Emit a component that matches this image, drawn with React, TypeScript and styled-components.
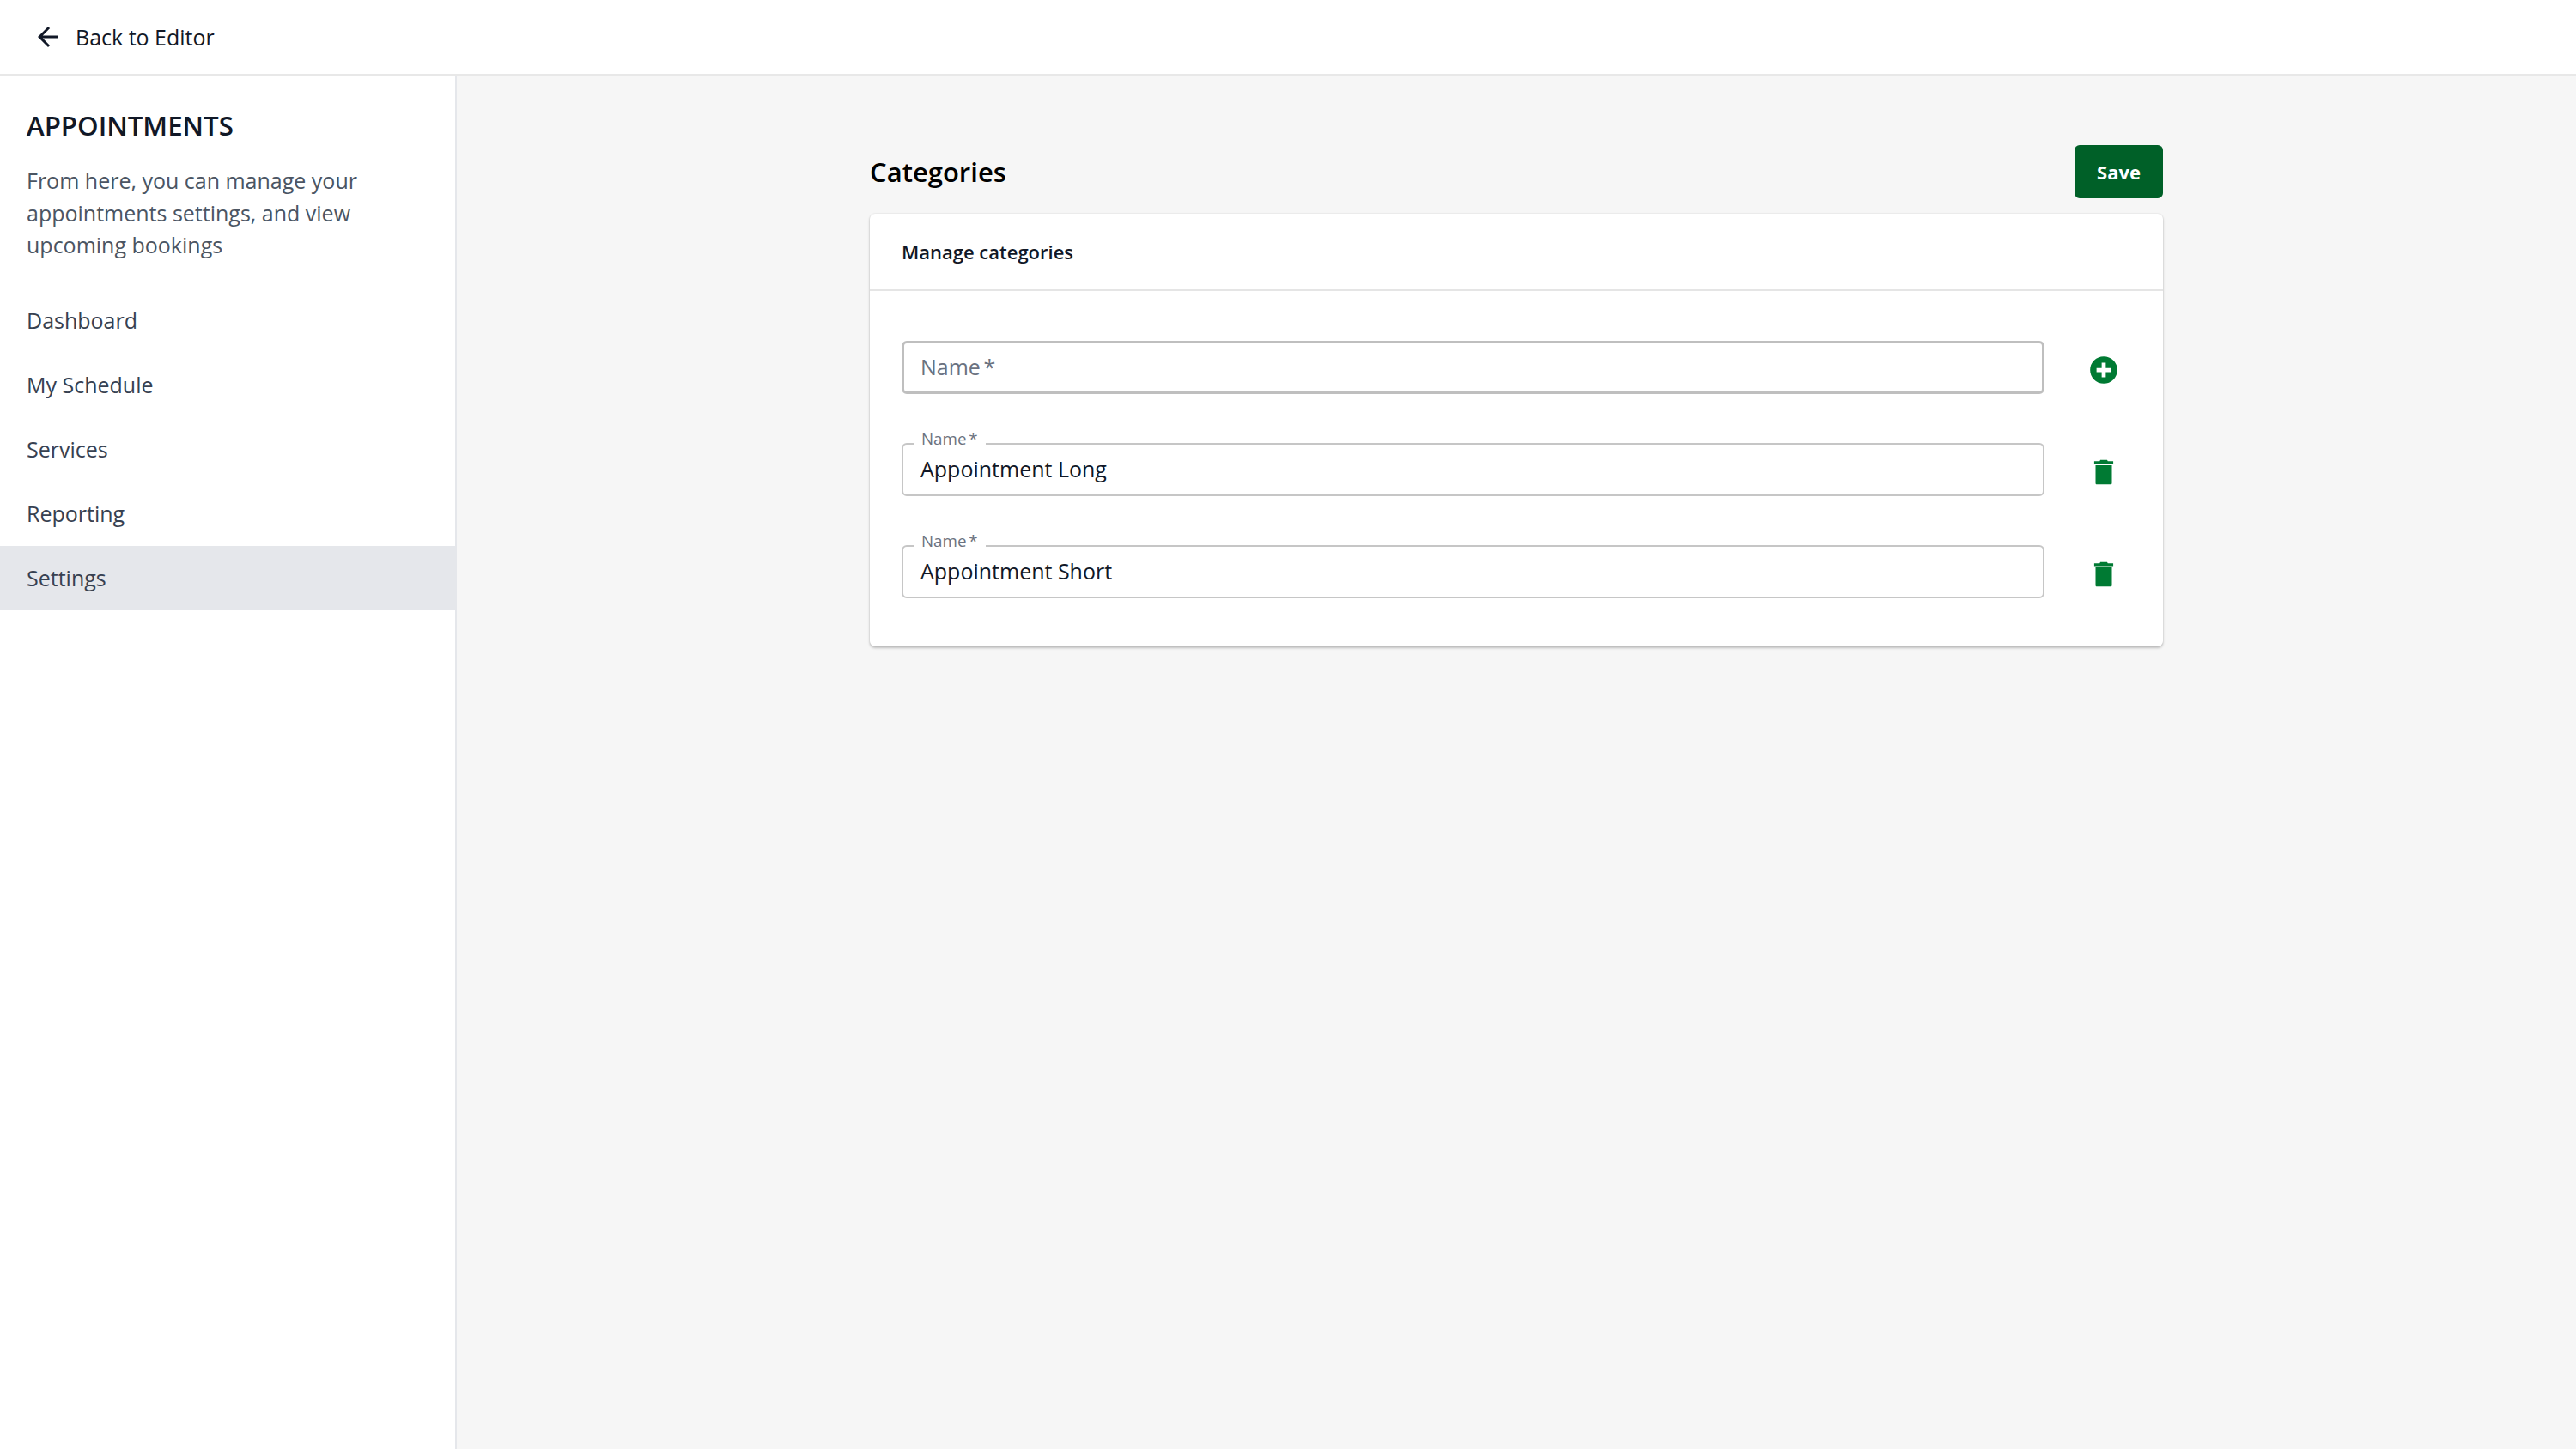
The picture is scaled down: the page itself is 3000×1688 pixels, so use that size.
import { createGlobalStyle } from "styled-components";
import styled from "styled-components";

const GlobalStyle = createGlobalStyle`
  html, body {
    margin: 0;
    padding: 0;
    background-color: #f6f6f6;
    font-family: "Open Sans", "Noto Sans", sans-serif;
  }
  * {
    box-sizing: border-box;
  }
`;

const Page = styled.div`
  width: 3000px;
  height: 1688px;
  display: flex;
  flex-direction: column;
  overflow: hidden;
`;

const TopBar = styled.header`
  height: 88px;
  flex-shrink: 0;
  display: flex;
  align-items: center;
  padding-left: 38px;
  gap: 14px;
  background-color: #fff;
  border-bottom: 2px solid #e8e8e8;
`;

const BackLabel = styled.span`
  font-size: 25px;
  color: #111827;
`;

const Body = styled.div`
  flex: 1;
  display: flex;
  min-height: 0;
`;

const Sidebar = styled.aside`
  width: 532px;
  flex-shrink: 0;
  background-color: #fff;
  border-right: 2px solid #e5e7eb;
  display: flex;
  flex-direction: column;
`;

const SideHeader = styled.div`
  padding: 38px 31px 31px;
`;

const SideTitle = styled.h1`
  margin: 0 0 26px;
  font-size: 31.25px;
  line-height: 40px;
  font-weight: 600;
  color: #111827;
`;

const SideText = styled.p`
  margin: 0;
  font-size: 25px;
  line-height: 37.5px;
  color: #4b5563;
`;

const NavItem = styled.div<{ $active?: boolean }>`
  height: 75px;
  display: flex;
  align-items: center;
  padding-left: 31px;
  font-size: 25px;
  color: #374151;
  background-color: ${(props) => (props.$active ? "#e5e7eb" : "transparent")};
`;

const Main = styled.main`
  flex: 1;
  display: flex;
  justify-content: center;
  padding-top: 81px;
`;

const Content = styled.div`
  width: 1506px;
`;

const ContentHeader = styled.div`
  height: 62px;
  margin-bottom: 18px;
  display: flex;
  align-items: center;
  justify-content: space-between;
`;

const PageTitle = styled.h2`
  margin: 0;
  font-size: 31px;
  font-weight: 600;
  color: #000;
`;

const SaveButton = styled.button`
  width: 103px;
  height: 62px;
  border: none;
  border-radius: 6px;
  background-color: #006028;
  color: #fff;
  font-family: inherit;
  font-size: 22px;
  font-weight: 700;
`;

const Card = styled.section`
  background-color: #fff;
  border-radius: 6px;
  box-shadow: 0 2px 3px rgba(0, 0, 0, 0.22), 0 0 2px rgba(0, 0, 0, 0.14);
`;

const CardHeader = styled.div`
  height: 90px;
  display: flex;
  align-items: center;
  padding-left: 37px;
  border-bottom: 2px solid #e5e5e5;
  font-size: 22px;
  font-weight: 600;
  color: #111827;
`;

const CardBody = styled.div`
  padding: 58px 0 56px 37px;
  display: flex;
  flex-direction: column;
  gap: 57px;
`;

const Row = styled.div`
  display: flex;
  align-items: center;
`;

const Field = styled.div<{ $empty?: boolean }>`
  position: relative;
  width: 1331px;
  height: 62px;
  display: flex;
  align-items: center;
  padding: ${(props) => (props.$empty ? "0 19px 2px" : "0 20px 3px")};
  border-radius: 6px;
  border: ${(props) => (props.$empty ? "3px solid #bfbfbf" : "2px solid #c6c6c6")};
  font-size: 25px;
  color: #111827;
`;

const Placeholder = styled.span`
  font-size: 25px;
  word-spacing: -3px;
  color: #6b7280;
`;

const FloatingLabel = styled.label`
  position: absolute;
  top: -19px;
  left: 12px;
  padding: 0 9px;
  background: linear-gradient(to bottom, transparent 60%, #fff 60%);
  font-size: 18.75px;
  word-spacing: -2px;
  line-height: 24px;
  color: #6b7280;
`;

const IconButton = styled.div`
  width: 38px;
  height: 38px;
  margin: 5px 0 0 50px;
  display: flex;
  align-items: center;
  justify-content: center;
  color: #007a33;
`;

const BackIcon = () => (
  <svg width="36" height="36" viewBox="0 0 24 24" fill="#111827">
    <path d="M20 11H7.83l5.59-5.59L12 4l-8 8 8 8 1.41-1.41L7.83 13H20v-2z" />
  </svg>
);

const AddIcon = () => (
  <svg width="38" height="38" viewBox="0 0 24 24" fill="currentColor">
    <path
      fillRule="evenodd"
      d="M12 2a10 10 0 1 0 0 20a10 10 0 1 0 0-20zM10.5 6.7h3v3.8h3.8v3h-3.8v3.8h-3v-3.8H6.7v-3h3.8z"
    />
  </svg>
);

const TrashIcon = () => (
  <svg width="38" height="38" viewBox="0 0 24 24" fill="currentColor">
    <path d="M6 20c0 .6.4 1 1 1h10c.6 0 1-.4 1-1V7H6v13zM19 4h-4l-.5-1h-5L9 4H5v2h14V4z" />
  </svg>
);

const navItems = ["Dashboard", "My Schedule", "Services", "Reporting", "Settings"];
const categories = ["Appointment Long", "Appointment Short"];

function App() {
  return (
    <Page>
      <GlobalStyle />
      <TopBar>
        <BackIcon />
        <BackLabel>Back to Editor</BackLabel>
      </TopBar>
      <Body>
        <Sidebar>
          <SideHeader>
            <SideTitle>APPOINTMENTS</SideTitle>
            <SideText>
              From here, you can manage your appointments settings, and view
              upcoming bookings
            </SideText>
          </SideHeader>
          {navItems.map((item) => (
            <NavItem key={item} $active={item === "Settings"}>
              {item}
            </NavItem>
          ))}
        </Sidebar>
        <Main>
          <Content>
            <ContentHeader>
              <PageTitle>Categories</PageTitle>
              <SaveButton>Save</SaveButton>
            </ContentHeader>
            <Card>
              <CardHeader>Manage categories</CardHeader>
              <CardBody>
                <Row>
                  <Field $empty>
                    <Placeholder>Name *</Placeholder>
                  </Field>
                  <IconButton>
                    <AddIcon />
                  </IconButton>
                </Row>
                {categories.map((category) => (
                  <Row key={category}>
                    <Field>
                      <FloatingLabel>Name *</FloatingLabel>
                      {category}
                    </Field>
                    <IconButton>
                      <TrashIcon />
                    </IconButton>
                  </Row>
                ))}
              </CardBody>
            </Card>
          </Content>
        </Main>
      </Body>
    </Page>
  );
}

export default App;
